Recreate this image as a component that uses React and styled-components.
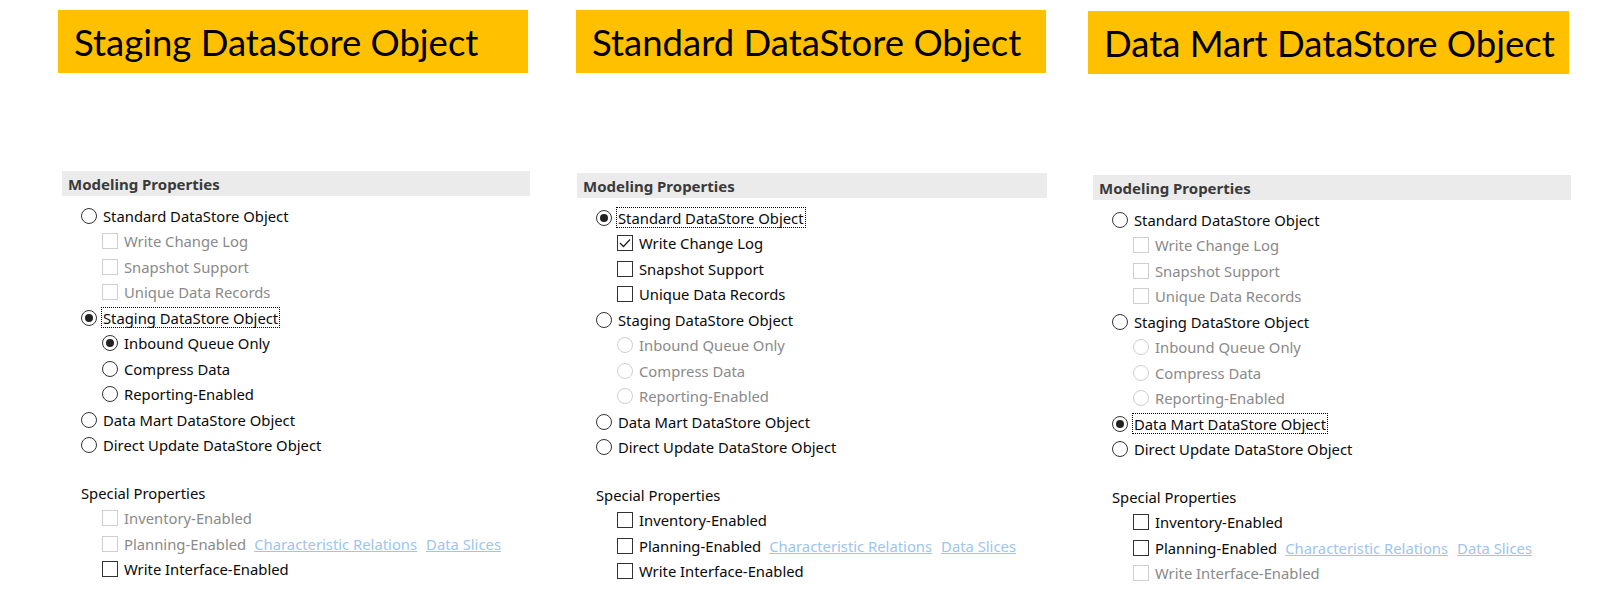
import React from "react";
import styled, { createGlobalStyle } from "styled-components";

const GlobalStyle = createGlobalStyle`
  body {
    margin: 0;
    background: #ffffff;
  }
`;

const Page = styled.div`
  display: flex;
  flex-direction: row;
  align-items: flex-start;
  width: 1600px;
  height: 592px;
  overflow: hidden;
  font-family: "Noto Sans", "Open Sans", sans-serif;
`;

const Column = styled.div`
  display: flex;
  flex-direction: column;
  margin-left: ${(p) => p.$left}px;
  padding-top: ${(p) => p.$top}px;
  width: ${(p) => p.$width}px;
  flex-shrink: 0;
`;

const Banner = styled.div`
  display: flex;
  align-items: center;
  height: 63px;
  width: ${(p) => p.$width}px;
  margin-left: ${(p) => p.$shift}px;
  padding-left: 16px;
  box-sizing: border-box;
  background: #ffc000;
  color: #000;
  font-family: Lato, "Open Sans", sans-serif;
  font-size: 36.5px;
  white-space: nowrap;
`;

const SectionBar = styled.div`
  display: flex;
  align-items: center;
  height: 25px;
  margin-top: ${(p) => p.$gap}px;
  padding-left: 6px;
  background: #ebebeb;
  color: #3a3a3a;
  font-size: 15px;
  font-weight: 700;
`;

const Options = styled.div`
  display: flex;
  flex-direction: column;
  padding-top: 7px;
  padding-left: 19px;
`;

const Row = styled.div`
  display: flex;
  align-items: center;
  height: 25.5px;
  padding-left: ${(p) => (p.$level === 2 ? 21 : 0)}px;
  margin-top: ${(p) => (p.$spaced ? 22 : 0)}px;
  white-space: nowrap;
`;

const Radio = styled.span`
  position: relative;
  width: 16px;
  height: 16px;
  box-sizing: border-box;
  border-radius: 50%;
  border: 1px solid ${(p) => (p.$disabled ? "#cfcfcf" : "#333333")};
  background: #fff;
  flex-shrink: 0;

  &::after {
    content: "";
    display: ${(p) => (p.$checked ? "block" : "none")};
    position: absolute;
    left: 3px;
    top: 3px;
    width: 8px;
    height: 8px;
    border-radius: 50%;
    background: #222;
  }
`;

const Box = styled.span`
  display: flex;
  align-items: center;
  justify-content: center;
  width: 16px;
  height: 16px;
  box-sizing: border-box;
  border: 1px solid ${(p) => (p.$disabled ? "#cfcfcf" : "#333333")};
  background: #fff;
  flex-shrink: 0;
`;

const Label = styled.span`
  display: inline-flex;
  align-items: center;
  height: 19px;
  margin-left: 4px;
  padding: 0 1px;
  border: 1px dotted ${(p) => (p.$focus ? "#000" : "transparent")};
  color: ${(p) => (p.$disabled ? "#8a8a8a" : "#0a0a0a")};
  font-size: 14.8px;
`;

const Heading = styled.span`
  color: #0a0a0a;
  font-size: 14.8px;
`;

const Link = styled.span`
  margin-left: ${(p) => p.$gap}px;
  color: #9cc5ef;
  text-decoration: underline;
  font-size: 14.8px;
`;

const CheckMark = () => (
  <svg width="14" height="14" viewBox="0 0 14 14">
    <polyline points="2,7 5.5,10.5 12,3.5" fill="none" stroke="#222" strokeWidth="1.3" />
  </svg>
);

const RadioRow = ({ level, checked, disabled, focus, children }) => (
  <Row $level={level}>
    <Radio $checked={checked} $disabled={disabled} />
    <Label $disabled={disabled} $focus={focus}>
      {children}
    </Label>
  </Row>
);

const CheckRow = ({ level, checked, disabled, links, children }) => (
  <Row $level={level}>
    <Box $disabled={disabled}>{checked && <CheckMark />}</Box>
    <Label $disabled={disabled}>{children}</Label>
    {links && (
      <>
        <Link $gap={6}>Characteristic Relations</Link>
        <Link $gap={9}>Data Slices</Link>
      </>
    )}
  </Row>
);

// left = x of the grey section bar; bannerShift = banner x relative to it
const panels = [
  {
    title: "Staging DataStore Object",
    left: 62,
    width: 468,
    bannerWidth: 470,
    bannerShift: -4,
    top: 10,
    gap: 98,
    selected: "staging",
    special: { inventory: true, planning: true, write: false },
  },
  {
    title: "Standard DataStore Object",
    left: 47,
    width: 470,
    bannerWidth: 470,
    bannerShift: -1,
    top: 10,
    gap: 100,
    selected: "standard",
    special: { inventory: false, planning: false, write: false },
  },
  {
    title: "Data Mart DataStore Object",
    left: 46,
    width: 478,
    bannerWidth: 481,
    bannerShift: -5,
    top: 11,
    gap: 101,
    selected: "datamart",
    special: { inventory: false, planning: false, write: true },
  },
];

const Panel = ({ p }) => {
  const std = p.selected === "standard";
  const stg = p.selected === "staging";
  const dm = p.selected === "datamart";
  return (
    <Column $left={p.left} $top={p.top} $width={p.width}>
      <Banner $width={p.bannerWidth} $shift={p.bannerShift}>
        {p.title}
      </Banner>
      <SectionBar $gap={p.gap}>Modeling Properties</SectionBar>
      <Options>
        <RadioRow checked={std} focus={std}>Standard DataStore Object</RadioRow>
        <CheckRow level={2} checked={std} disabled={!std}>Write Change Log</CheckRow>
        <CheckRow level={2} disabled={!std}>Snapshot Support</CheckRow>
        <CheckRow level={2} disabled={!std}>Unique Data Records</CheckRow>
        <RadioRow checked={stg} focus={stg}>Staging DataStore Object</RadioRow>
        <RadioRow level={2} checked={stg} disabled={!stg}>Inbound Queue Only</RadioRow>
        <RadioRow level={2} disabled={!stg}>Compress Data</RadioRow>
        <RadioRow level={2} disabled={!stg}>Reporting-Enabled</RadioRow>
        <RadioRow checked={dm} focus={dm}>Data Mart DataStore Object</RadioRow>
        <RadioRow>Direct Update DataStore Object</RadioRow>
        <Row $spaced>
          <Heading>Special Properties</Heading>
        </Row>
        <CheckRow level={2} disabled={p.special.inventory}>Inventory-Enabled</CheckRow>
        <CheckRow level={2} disabled={p.special.planning} links>
          Planning-Enabled
        </CheckRow>
        <CheckRow level={2} disabled={p.special.write}>Write Interface-Enabled</CheckRow>
      </Options>
    </Column>
  );
};

const App = () => (
  <>
    <GlobalStyle />
    <Page>
      {panels.map((p) => (
        <Panel key={p.title} p={p} />
      ))}
    </Page>
  </>
);

export default App;
